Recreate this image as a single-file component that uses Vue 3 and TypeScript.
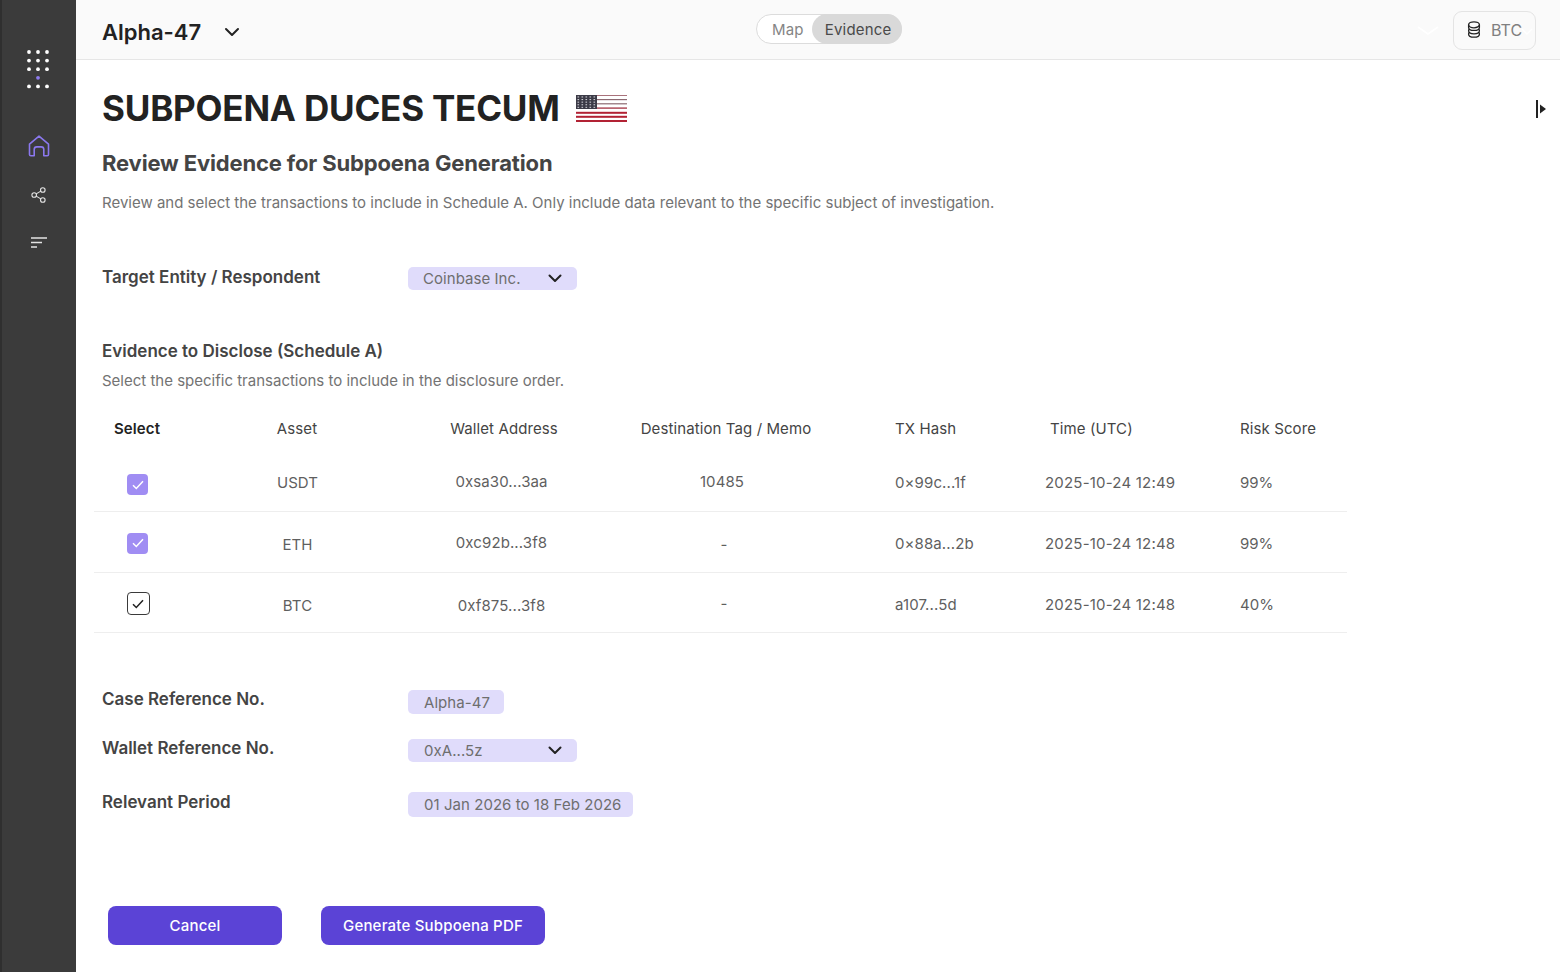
<script setup lang="ts">
interface Row {
  asset: string
  wallet: string
  memo: string
  hash: string
  time: string
  risk: string
  checked: boolean
  nudge: string[]
}

const headers = ['Select', 'Asset', 'Wallet Address', 'Destination Tag / Memo', 'TX Hash', 'Time (UTC)', 'Risk Score']

// nudge = vertical tweak per cell, the source rows are not perfectly aligned
const rows: Row[] = [
  { asset: 'USDT', wallet: '0xsa30...3aa', memo: '10485', hash: '0×99c...1f', time: '2025-10-24 12:49', risk: '99%', checked: true, nudge: ['dn2', '', 'up', 'up', '', '', ''] },
  { asset: 'ETH', wallet: '0xc92b...3f8', memo: '-', hash: '0×88a...2b', time: '2025-10-24 12:48', risk: '99%', checked: true, nudge: ['', 'dn', 'up', 'dn', '', '', ''] },
  { asset: 'BTC', wallet: '0xf875...3f8', memo: '-', hash: 'a107...5d', time: '2025-10-24 12:48', risk: '40%', checked: false, nudge: ['up', 'dn', 'dn', 'up', '', '', ''] }
]

const dots = [0, 1, 2, 3, 4]
</script>

<template>
  <div class="page">
    <aside class="sidebar">
      <svg class="logo" width="24" height="40" viewBox="0 0 24 40">
        <template v-for="r in dots" :key="r">
          <template v-if="r !== 3">
            <circle cx="3" :cy="2 + r * 8.6" r="1.9" fill="#fff" />
            <circle cx="12" :cy="2 + r * 8.6" r="1.9" fill="#fff" />
            <circle cx="21" :cy="2 + r * 8.6" r="1.9" fill="#fff" />
          </template>
          <circle v-else cx="12" :cy="2 + r * 8.6" r="1.9" fill="#8f7cf0" />
        </template>
      </svg>
      <nav class="nav">
        <svg width="22" height="22" viewBox="0 0 22 22" fill="none" stroke="#8b78ee" stroke-width="1.6" stroke-linejoin="round">
          <path d="M1.500 9.200 11 1.200l9.500 8v10.200a1.300 1.300 0 0 1-1.300 1.300h-3.400v-6.200a2.600 2.600 0 0 0-2.600-2.600H8.800a2.600 2.600 0 0 0-2.600 2.600v6.200H2.800a1.300 1.300 0 0 1-1.300-1.300z" />
        </svg>
        <svg class="nav-share" width="16" height="16" viewBox="0 0 16 16" fill="none" stroke="#e4e4e4" stroke-width="1.1">
          <circle cx="3.200" cy="8" r="2.300" />
          <circle cx="11.800" cy="3" r="2.300" />
          <circle cx="11.800" cy="13" r="2.300" />
          <path d="M5.200 6.900 9.800 4.100M5.200 9.100l4.600 2.800" />
        </svg>
        <svg class="nav-list" width="16" height="12" viewBox="0 0 16 12" fill="none" stroke="#e4e4e4" stroke-width="1.3">
          <path d="M0 1h16M0 5.500h11M0 10h6" />
        </svg>
      </nav>
    </aside>

    <div class="content">
      <header class="topbar">
        <div class="case">
          <span class="case-name">Alpha-47</span>
          <svg width="16" height="10" viewBox="0 0 16 10" fill="none" stroke="#222" stroke-width="2" stroke-linecap="round" stroke-linejoin="round">
            <path d="M2 2l6 6 6-6" />
          </svg>
        </div>
        <div class="toggle">
          <span class="toggle-item">Map</span>
          <span class="toggle-item active">Evidence</span>
        </div>
        <div class="top-right">
          <svg class="ghost" width="24" height="10" viewBox="0 0 24 10" fill="none" stroke="#fff" stroke-width="1.6">
            <path d="M2 1l10 7 10-7" />
          </svg>
          <div class="coin">
            <svg width="14" height="18" viewBox="0 0 14 18" fill="none" stroke="#222" stroke-width="1.300">
              <ellipse cx="7" cy="3.800" rx="5.400" ry="3" />
              <path d="M1.600 3.800v2.600c0 1.700 2.400 3 5.400 3s5.400-1.300 5.400-3V3.800" />
              <path d="M2.200 8.200c-.5.4-.6 1-.6 1.600 0 1.700 2.400 3 5.400 3s5.400-1.300 5.400-3c0-.6-.1-1.200-.6-1.600" />
              <path d="M2.200 11.600c-.5.4-.6 1-.6 1.600 0 1.700 2.400 3 5.400 3s5.400-1.300 5.400-3c0-.6-.1-1.200-.6-1.600" />
            </svg>
            <span>BTC</span>
            <svg class="coin-caret" width="12" height="8" viewBox="0 0 12 8" fill="none" stroke="#fff" stroke-width="1.400">
              <path d="M1 1l5 5 5-5" />
            </svg>
          </div>
        </div>
      </header>

      <main class="main">
        <svg class="collapse" width="12" height="18" viewBox="0 0 12 18">
          <rect x="0" y="0" width="2" height="18" fill="#222" />
          <path d="M4 4.500 10 9l-6 4.500z" fill="#222" />
        </svg>

        <div class="title-row">
          <h1>SUBPOENA DUCES TECUM</h1>
          <svg width="51" height="27" viewBox="0 0 51 27">
            <rect width="51" height="27" fill="#fff" />
            <rect y="0" width="51" height="1" fill="#a9727b" />
            <rect y="4" width="51" height="1.200" fill="#8c6a72" />
            <rect y="8.200" width="51" height="1.200" fill="#8c6a72" />
            <rect y="12.400" width="51" height="1.400" fill="#a8404f" />
            <rect y="16.800" width="51" height="2" fill="#b22234" />
            <rect y="20.800" width="51" height="2" fill="#b22234" />
            <rect y="25" width="51" height="2" fill="#b22234" />
            <rect width="21" height="14" fill="#3c3b47" />
            <g fill="#c9c9d0">
              <template v-for="a in dots" :key="a">
                <rect v-for="b in dots" :key="b" :x="1.500 + b * 4" :y="1.400 + a * 2.600" width="1.600" height="1.100" />
              </template>
            </g>
          </svg>
        </div>

        <h2>Review Evidence for Subpoena Generation</h2>
        <p class="lead">Review and select the transactions to include in Schedule A. Only include data relevant to the specific subject of investigation.</p>

        <div class="field target">
          <label>Target Entity / Respondent</label>
          <div class="pill select first">Coinbase Inc.
            <svg width="14" height="9" viewBox="0 0 14 9" fill="none" stroke="#222" stroke-width="2" stroke-linecap="round" stroke-linejoin="round"><path d="M1.500 1.500 7 7l5.500-5.500" /></svg>
          </div>
        </div>

        <h3>Evidence to Disclose (Schedule A)</h3>
        <p class="hint">Select the specific transactions to include in the disclosure order.</p>

        <div class="table">
          <div class="thead tr">
            <div v-for="(h, i) in headers" :key="h" :class="['th', 'col' + i]">{{ h }}</div>
          </div>
          <div v-for="row in rows" :key="row.asset" class="tr body-row">
            <div :class="['td col0', row.nudge[0]]">
              <span :class="['check', { on: row.checked }]">
                <svg width="12" height="10" viewBox="0 0 12 10" fill="none" stroke-width="1.500">
                  <path d="M1 5.200 4.300 8.500 11 1.200" :stroke="row.checked ? '#fff' : '#222'" />
                </svg>
              </span>
            </div>
            <div :class="['td col1', row.nudge[1]]">{{ row.asset }}</div>
            <div :class="['td col2', row.nudge[2]]">{{ row.wallet }}</div>
            <div :class="['td col3', row.nudge[3], { dash: row.memo === '-' }]">{{ row.memo }}</div>
            <div :class="['td col4', row.nudge[4]]">{{ row.hash }}</div>
            <div :class="['td col5', row.nudge[5]]">{{ row.time }}</div>
            <div :class="['td col6', row.nudge[6]]">{{ row.risk }}</div>
          </div>
        </div>

        <div class="field case-field">
          <label>Case Reference No.</label>
          <div class="pill short">Alpha-47</div>
        </div>
        <div class="field wallet-field">
          <label>Wallet Reference No.</label>
          <div class="pill select">0xA...5z
            <svg width="14" height="9" viewBox="0 0 14 9" fill="none" stroke="#222" stroke-width="2" stroke-linecap="round" stroke-linejoin="round"><path d="M1.500 1.500 7 7l5.500-5.500" /></svg>
          </div>
        </div>
        <div class="field period-field">
          <label>Relevant Period</label>
          <div class="pill tall">01 Jan 2026 to 18 Feb 2026</div>
        </div>

        <div class="actions">
          <button class="btn cancel" type="button">Cancel</button>
          <button class="btn generate" type="button">Generate Subpoena PDF</button>
        </div>
      </main>
    </div>
  </div>
</template>

<style>
html,
body {
  margin: 0;
  background: #fff;
}
</style>

<style scoped>
.page {
  display: flex;
  width: 1560px;
  height: 972px;
  overflow: hidden;
  font-family: Inter, "Liberation Sans", sans-serif;
  color: #666;
}

/* sidebar */
.sidebar {
  flex: 0 0 74px;
  border-left: 2px solid #2f2f2f;
  background: #3b3b3b;
  display: flex;
  flex-direction: column;
  align-items: center;
  padding-top: 50px;
  box-sizing: content-box;
  width: 74px;
}
.logo {
  margin-left: -2px;
}
.nav {
  display: flex;
  flex-direction: column;
  align-items: center;
  margin-top: 45px;
}
.nav-share {
  margin-top: 30px;
}
.nav-list {
  margin-top: 34px;
}

/* top bar */
.content {
  flex: 1;
  min-width: 0;
  display: flex;
  flex-direction: column;
}
.topbar {
  height: 59px;
  flex: none;
  display: flex;
  align-items: flex-start;
  justify-content: space-between;
  position: relative;
  background: #fafafa;
  border-bottom: 1px solid #e6e6e6;
  padding: 0 24px 0 26px;
}
.case {
  display: flex;
  align-items: center;
  gap: 23px;
  height: 64px;
}
.case-name {
  font-size: 22px;
  font-weight: 600;
  color: #222;
}
.toggle {
  position: absolute;
  left: 680px;
  top: 14px;
  height: 30px;
  width: 146px;
  display: flex;
  box-sizing: border-box;
  border: 1px solid #dcdcdc;
  border-radius: 15px;
  background: #fff;
  font-size: 15px;
  letter-spacing: 0.2px;
}
.toggle-item {
  display: flex;
  align-items: center;
  padding: 0 9px 0 15px;
  color: #858585;
}
.toggle-item.active {
  flex: 1;
  margin: -1px;
  padding: 0 0 0 13px;
  background: #d9d9d9;
  border-radius: 15px;
  color: #4a4a4a;
}
.top-right {
  display: flex;
  align-items: center;
  gap: 13px;
  margin-top: 11px;
}
.coin {
  width: 83px;
  height: 39px;
  box-sizing: border-box;
  border: 1px solid #e4e4e4;
  border-radius: 9px;
  display: flex;
  align-items: center;
  gap: 10px;
  padding: 0 0 2px 13px;
  font-size: 16px;
  color: #808080;
  position: relative;
}
.coin-caret {
  position: absolute;
  right: 2px;
  top: 16px;
}

/* main */
.main {
  flex: 1;
  position: relative;
  padding: 26px 0 0 26px;
}
.collapse {
  position: absolute;
  left: 1460px;
  top: 40px;
}
.title-row {
  display: flex;
  align-items: center;
  gap: 16px;
  height: 44px;
}
h1 {
  margin: 0;
  font-size: 35px;
  letter-spacing: -0.2px;
  line-height: 44px;
  font-weight: 700;
  color: #222;
  white-space: nowrap;
}
h2 {
  margin: 19px 0 0;
  font-size: 22px;
  letter-spacing: -0.15px;
  line-height: 28px;
  font-weight: 700;
  color: #444;
}
.lead {
  margin: 14px 0 0;
  font-size: 15px;
  line-height: 24px;
  color: #737373;
}
.field {
  display: flex;
  align-items: flex-start;
}
.field label {
  flex: 0 0 306px;
  margin-top: -1px;
  font-size: 17px;
  line-height: 22px;
  font-weight: 600;
  color: #444;
}
.target {
  margin-top: 52px;
}
.pill {
  display: flex;
  align-items: center;
  justify-content: space-between;
  gap: 16px;
  height: 24px;
  margin-top: 1px;
  padding: 0 12px 0 16px;
  box-sizing: border-box;
  background: #e0dcfb;
  border-radius: 5px;
  font-size: 15px;
  letter-spacing: 0.05px;
  color: #6e6e6e;
  white-space: nowrap;
}
.pill.select {
  width: 169px;
  height: 23px;
  padding-right: 15px;
}
.pill.first {
  padding-left: 15px;
  margin-top: 0;
}
.pill.short {
  padding-right: 14px;
}
.pill.tall {
  height: 25px;
  margin-top: 0;
}
h3 {
  margin: 49px 0 0;
  font-size: 17px;
  line-height: 24px;
  font-weight: 600;
  color: #444;
}
.hint {
  margin: 7px 0 0;
  font-size: 15px;
  line-height: 22px;
  color: #737373;
}

/* table */
.table {
  width: 1253px;
  margin: 12px 0 0 -8px;
}
.tr {
  display: grid;
  grid-template-columns: 88px 230px 182px 262px 189px 195px 107px;
  align-items: center;
}
.thead {
  height: 48px;
}
.body-row {
  height: 61px;
  padding-top: 2px;
  border-bottom: 1px solid #eeeeee;
  box-sizing: border-box;
  font-size: 15px;
  letter-spacing: 0.1px;
  color: #5f5f5f;
}
.thead + .body-row {
  height: 60px;
}
.body-row:last-child {
  height: 60px;
  padding-top: 4px;
}
.th {
  font-size: 15px;
  letter-spacing: 0.1px;
  color: #444;
}
.th.col0 {
  font-weight: 600;
  color: #222;
  padding-right: 2px;
}
.col0,
.col1,
.col2,
.col3 {
  text-align: center;
}
.th.col2,
.th.col3 {
  padding-left: 2px;
}
.td.col1 {
  padding-left: 1px;
}
.td.col2 {
  padding-right: 3px;
}
.td.col3 {
  padding-right: 6px;
}
.td.col3.dash {
  padding-right: 2px;
}
.col4 {
  padding-left: 39px;
}
.th.col5 {
  padding-left: 5px;
}
.td.col5 {
  letter-spacing: 0.2px;
}
.td.col6 {
  letter-spacing: 0;
}
.td.dn {
  padding-top: 2px;
}
.td.dn2 {
  padding-top: 4px;
}
.td.up {
  padding-bottom: 2px;
}
.td.col0 {
  display: flex;
  justify-content: center;
}
.check {
  width: 23px;
  height: 23px;
  box-sizing: border-box;
  border: 1.5px solid #3a3a3a;
  border-radius: 4px;
  display: flex;
  align-items: center;
  justify-content: center;
}
.check.on {
  width: 21px;
  height: 21px;
  margin-right: 1px;
  background: #a08df3;
  border: 0;
}

.case-field {
  margin-top: 56px;
}
.wallet-field {
  margin-top: 24px;
}
.period-field {
  margin-top: 30px;
}

.actions {
  display: flex;
  gap: 39px;
  margin: 89px 0 0 6px;
}
.btn {
  height: 39px;
  border: 0;
  border-radius: 8px;
  background: #5b43d6;
  color: #fff;
  font-family: inherit;
  font-size: 15px;
  letter-spacing: 0.2px;
  font-weight: 500;
}
.cancel {
  width: 174px;
}
.generate {
  width: 224px;
}
</style>
